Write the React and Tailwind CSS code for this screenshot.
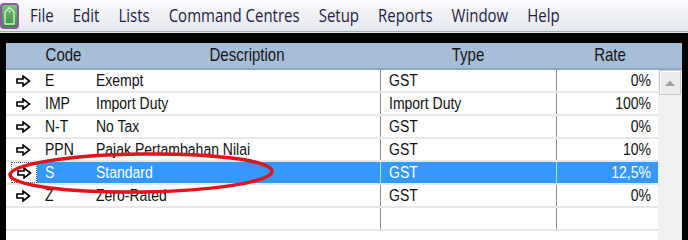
import { Fragment } from 'react'

const MENU = ['File', 'Edit', 'Lists', 'Command Centres', 'Setup', 'Reports', 'Window', 'Help']

const ROWS = [
    { code: 'E', desc: 'Exempt', type: 'GST', rate: '0%' },
    { code: 'IMP', desc: 'Import Duty', type: 'Import Duty', rate: '100%' },
    { code: 'N-T', desc: 'No Tax', type: 'GST', rate: '0%' },
    { code: 'PPN', desc: 'Pajak Pertambahan Nilai', type: 'GST', rate: '10%' },
    { code: 'S', desc: 'Standard', type: 'GST', rate: '12,5%', selected: true },
    { code: 'Z', desc: 'Zero-Rated', type: 'GST', rate: '0%' },
    { code: '', desc: '', type: '', rate: '', blank: true },
]

function AppIcon() {
    return (
        <svg width="19" height="26" viewBox="0 0 19 26" className="shrink-0">
            <defs>
                <linearGradient id="g" x1="0" y1="0" x2="0" y2="1">
                    <stop offset="0" stopColor="#7cc77a" />
                    <stop offset="1" stopColor="#2f8a35" />
                </linearGradient>
            </defs>
            <rect x="1" y="1" width="17" height="24" rx="3" fill="url(#g)" stroke="#8b5ca3" strokeWidth="2" />
            <path d="M5 9 L9.5 4.5 L14 9 L14 21 L5 21 Z" fill="none" stroke="#d9f2d4" strokeWidth="1.3" />
            <circle cx="9.5" cy="8.5" r="1" fill="#d9f2d4" />
        </svg>
    )
}

function RowArrow() {
    return (
        <svg width="15" height="12" viewBox="0 0 15 12">
            <polygon points="1,4 7,4 7,1 13.5,6 7,11 7,8 1,8" fill="white" stroke="black" strokeWidth="1.6" strokeLinejoin="miter" />
        </svg>
    )
}

function Txt({ children, className = '' }) {
    return <span className={`inline-block scale-y-[1.18] ${className}`}>{children}</span>
}

export default function App() {
    return (
        <div className="w-[688px] h-[240px] overflow-hidden bg-white relative" style={{ fontFamily: '"Liberation Sans", Arial, sans-serif' }}>
            {/* menu bar */}
            <div className="h-[31px] flex items-center bg-gradient-to-b from-[#fbfbfd] to-[#e4e8ef] text-[#1f1d45]" style={{ fontFamily: '"Open Sans", "Noto Sans", sans-serif' }}>
                <div className="pr-[11px] pt-[1px]"><AppIcon /></div>
                <div className="flex gap-[19px] text-[15px]">
                    {MENU.map((m) => (
                        <Txt key={m}>{m}</Txt>
                    ))}
                </div>
            </div>
            <div className="h-[1px] bg-[#a5a9b0]" />
            <div className="h-[1px] bg-[#e6e6e6]" />
            <div className="h-[10px] bg-black" />

            <div className="flex h-[197px]">
                <div className="w-[6px] bg-black" />
                <div className="w-[676px] flex flex-col">
                    {/* header */}
                    <div className="h-[27px] grid grid-cols-[31px_53px_290px_176px_102px_24px] items-center bg-[#a7bed8] border-b-2 border-[#8ea7c2] text-[15px] text-[#161616]">
                        <div />
                        <div className="text-center"><Txt>Code</Txt></div>
                        <div className="text-center pl-[24px]"><Txt>Description</Txt></div>
                        <div className="text-center"><Txt>Type</Txt></div>
                        <div className="text-center pl-[6px]"><Txt>Rate</Txt></div>
                        <div />
                    </div>
                    <div className="flex flex-1">
                        <div className="w-[652px] flex flex-col">
                            {ROWS.map((r, i) => (
                                <div
                                    key={i}
                                    className="h-[23px] grid grid-cols-[31px_53px_290px_176px_102px] border-b-2 border-[#e8e8e8] text-[14px]"
                                >
                                    <div className="flex items-center justify-center pl-[3px]">
                                        {r.selected ? (
                                            <div className="h-[21px] w-[27px] ml-[2px] border border-dotted border-[#555] flex items-center justify-center">
                                                <RowArrow />
                                            </div>
                                        ) : r.blank ? null : (
                                            <RowArrow />
                                        )}
                                    </div>
                                    {[r.code, r.desc, r.type, r.rate].map((v, j) => (
                                        <div
                                            key={j}
                                            className={[
                                                'flex items-center',
                                                r.selected ? 'bg-[#3399ff] text-white' : 'text-[#111]',
                                                j === 0 ? 'pl-[8px]' : '',
                                                j === 1 ? 'pl-[6px]' : '',
                                                j === 2 ? 'pl-[8px] border-l ' + (r.selected ? 'border-[#9fe3ff]' : 'border-[#8a8a8a]') : '',
                                                j === 3 ? 'justify-end pr-[7px] border-l ' + (r.selected ? 'border-[#9fe3ff]' : 'border-[#8a8a8a]') : '',
                                            ].join(' ')}
                                        >
                                            <Txt>{v}</Txt>
                                        </div>
                                    ))}
                                </div>
                            ))}
                        </div>
                        {/* scrollbar */}
                        <div className="w-[24px] flex flex-col bg-[#f1f1f1] pl-[1px] pr-[1px]">
                            <div className="h-[25px] bg-[#ececec] border border-[#c9c9c9] shadow-[inset_1px_1px_0_#fff] flex items-center justify-center">
                                <svg width="10" height="6" viewBox="0 0 10 6">
                                    <polygon points="0,6 5,0.5 10,6" fill="#a2a2a2" />
                                </svg>
                            </div>
                            <div className="flex-1" />
                        </div>
                    </div>
                </div>
                <div className="w-[6px] bg-black" />
            </div>

            {/* red highlight ring drawn over the row */}
            <svg className="absolute left-[5px] top-[150px] pointer-events-none" width="272" height="46" viewBox="0 0 272 46">
                <ellipse cx="136" cy="23" rx="131" ry="19" fill="none" stroke="#e3131b" strokeWidth="3.5" transform="rotate(-0.8 136 23)" />
            </svg>
        </div>
    )
}
